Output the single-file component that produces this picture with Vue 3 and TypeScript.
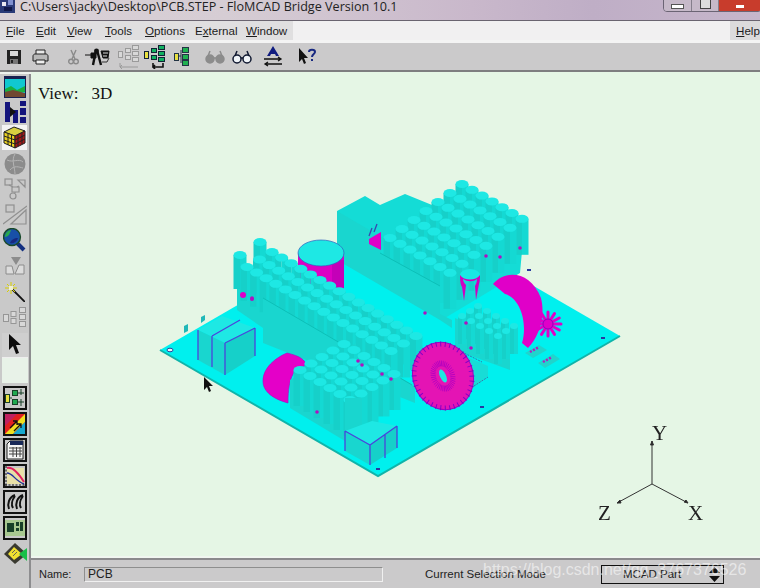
<script setup lang="ts">
interface Fin { x: number; y: number; h: number }
function grid(ox: number, oy: number, ax: number, ay: number, bx: number, by: number, na: number, nb: number, h: number): Fin[] {
  const out: Fin[] = []
  for (let b = 0; b < nb; b++) {
    for (let a = 0; a < na; a++) {
      out.push({ x: ox + a * ax + b * bx, y: oy + a * ay + b * by, h })
    }
  }
  return out.sort((p, q) => p.y - q.y)
}
const hs2 = grid(390, 240, 10, 5.8, 12, -9, 7, 7, 36)
const hs1 = [
  { x: 260, y: 244, h: 34 },
  { x: 240, y: 257, h: 34 },
  ...grid(247, 269, 9.6, 5.6, 12.5, -7.5, 16, 3, 34),
].sort((p, q) => p.y - q.y)
const hs3 = grid(300, 372, 10, 6, 11, -6.5, 6, 5, 36)
const hs4 = grid(462, 318, 9, 5, 8, -5, 5, 3, 28)

const ticks = Array.from({ length: 40 }, (_, i) => {
  const t = (i / 40) * Math.PI * 2
  const c = Math.cos(t)
  const s = Math.sin(t)
  return { x1: 443 + c * 26, y1: 378 + s * 30, x2: 443 + c * 31, y2: 378 + s * 35, x3: 443 + c * 7, y3: 378 + s * 10, x4: 443 + c * 12, y4: 378 + s * 16 }
})
const coil = Array.from({ length: 12 }, (_, i) => {
  const t = (i / 12) * Math.PI * 2
  return { x2: 548 + Math.cos(t) * 13, y2: 326 + Math.sin(t) * 12 }
})
const leftIcons = ['land', 'blue', 'rubik', 'sphere', 'shapes', 'tri', 'lens', 'gtri', 'wand', 'gtree']
const dots = [
  [362, 367], [358, 363], [382, 376], [391, 381], [317, 414],
  [252, 300], [486, 258], [500, 259], [520, 250],
  [466, 325], [471, 350], [425, 315],
]
</script>

<template>
  <div class="app">
    <header class="title">
      <svg class="appicon" width="15" height="14" viewBox="0 0 15 14">
        <rect x="0" y="0" width="15" height="14" fill="#2a3a78" />
        <rect x="2" y="3" width="4" height="4" fill="#e8e8f0" />
        <rect x="8" y="1" width="5" height="5" fill="#8090d0" />
        <rect x="4" y="8" width="8" height="4" fill="#10184a" />
      </svg>
      <span class="title-text">C:\Users\jacky\Desktop\PCB.STEP - FloMCAD Bridge Version 10.1</span>
      <div class="winbtns">
        <span class="wb wb-min"><i class="bar"></i></span>
        <span class="wb wb-max"><i class="sq"></i></span>
        <span class="wb wb-close"><i class="cross"></i></span>
      </div>
    </header>

    <nav class="menu">
      <div class="menu-left">
        <span class="m m1"><u>F</u>ile</span>
        <span class="m m2"><u>E</u>dit</span>
        <span class="m m3"><u>V</u>iew</span>
        <span class="m m4"><u>T</u>ools</span>
        <span class="m m5"><u>O</u>ptions</span>
        <span class="m m6">E<u>x</u>ternal</span>
        <span class="m m7"><u>W</u>indow</span>
      </div>
      <div class="menu-help"><u>H</u>elp</div>
    </nav>

    <div class="toolbar">
      <svg class="t-save" width="16" height="16" viewBox="0 0 16 16">
        <rect x="1" y="1" width="14" height="14" fill="#222" />
        <rect x="4" y="2" width="8" height="5" fill="#d8d8d8" />
        <rect x="4" y="10" width="8" height="5" fill="#777" />
        <rect x="5" y="11" width="2" height="3" fill="#222" />
      </svg>
      <svg class="t-print" width="17" height="16" viewBox="0 0 17 16">
        <path d="M4 1h9v5H4z" fill="#e8e8e8" stroke="#222" />
        <path d="M1 7c0-1 1-2 2-2h11c1 0 2 1 2 2v5H1z" fill="#b8b8b8" stroke="#222" />
        <path d="M4 11h9v4H4z" fill="#eee" stroke="#222" />
      </svg>
      <svg class="t-cut" width="11" height="16" viewBox="0 0 11 16" fill="none" stroke="#8a8a8a" stroke-width="1.4">
        <path d="M3 1l4 9M8 1l-4 9" />
        <circle cx="3" cy="12.5" r="2.3" />
        <circle cx="8" cy="12.5" r="2.3" />
      </svg>
      <svg class="t-fig" width="25" height="18" viewBox="0 0 25 18">
        <path d="M0 7h7M6 5h5v5H6zM16 3h8l-1 7h-5z" fill="#111" stroke="#111" />
        <path d="M11 2l-3 15M12 2l4 15" stroke="#111" stroke-width="2.4" fill="none" />
        <circle cx="11.5" cy="3" r="2.4" fill="#111" />
        <path d="M18 5h5M18 8h4" stroke="#ddd" />
        <path d="M17 14h5l2-4" stroke="#333" fill="none" />
      </svg>
      <svg class="t-tree" width="22" height="24" viewBox="0 0 22 24" fill="#d8d8d8" stroke="#9a9a9a">
        <rect x="0.5" y="6.5" width="4" height="6" />
        <rect x="7.5" y="3.5" width="5" height="4" /><rect x="14.5" y="0.5" width="6" height="4" />
        <rect x="7.5" y="10.5" width="5" height="4" /><rect x="14.5" y="6.5" width="6" height="4" />
        <rect x="14.5" y="12.5" width="6" height="4" />
        <path d="M2 18v4h18M4 20l-2 2 2 2" fill="none" />
      </svg>
      <svg class="t-tree2" width="22" height="24" viewBox="0 0 22 24" stroke="#123">
        <rect x="0.5" y="6.5" width="4" height="7" fill="#e8e040" />
        <rect x="7.5" y="3.5" width="5" height="4" fill="#10b060" /><rect x="14.5" y="0.5" width="6" height="4" fill="#10b060" />
        <rect x="7.5" y="10.5" width="5" height="4" fill="#10b060" /><rect x="14.5" y="6.5" width="6" height="4" fill="#10b060" />
        <rect x="14.5" y="12.5" width="6" height="4" fill="#10b060" />
        <path d="M9 18v4h10v-4M11 20l-2 2 2 2" fill="none" stroke="#111" stroke-width="1.6" />
      </svg>
      <svg class="t-tree3" width="15" height="19" viewBox="0 0 15 19" stroke="#234">
        <rect x="0.5" y="6.5" width="4" height="7" fill="#e8e040" />
        <rect x="8.5" y="0.5" width="6" height="5" fill="#20b050" />
        <rect x="8.5" y="7.5" width="6" height="5" fill="#20b050" />
        <rect x="8.5" y="13.5" width="6" height="5" fill="#20b050" />
        <path d="M5 9h2M7 3v13" fill="none" />
      </svg>
      <svg class="t-gl1" width="20" height="16" viewBox="0 0 20 16" fill="#8c8c8c" stroke="#8c8c8c" stroke-width="1.5">
        <circle cx="5" cy="10" r="4" /><circle cx="15" cy="10" r="4" />
        <path d="M3 7l2-5M17 7l-2-5M9 9h2" fill="none" />
      </svg>
      <svg class="t-gl2" width="20" height="16" viewBox="0 0 20 16" fill="#f0f4f8" stroke="#101830" stroke-width="1.5">
        <circle cx="5" cy="10" r="4" /><circle cx="15" cy="10" r="4" />
        <path d="M3 7l2-5M17 7l-2-5M9 9h2" fill="none" />
      </svg>
      <svg class="t-a" width="20" height="22" viewBox="0 0 20 22">
        <path d="M4 10L10 0l6 10h-3l-1-2H8l-1 2z" fill="#101c80" />
        <path d="M1 13h17M15 11l3 2-3 2M19 18H2M5 16l-3 2 3 2" fill="none" stroke="#111" stroke-width="1.3" />
      </svg>
      <svg class="t-help" width="18" height="18" viewBox="0 0 18 18">
        <path d="M0 0v14l3-3 2 5 2-1-2-5h4z" fill="#111" />
        <path d="M10 4c0-3 6-3 6 0 0 2-3 2-3 5M13 11v2" fill="none" stroke="#182880" stroke-width="2" />
      </svg>
    </div>

    <div class="body">
      <aside class="side">
        <div v-for="name in leftIcons" :key="name" class="tool">
          <svg v-if="name === 'land'" width="22" height="22" viewBox="0 0 22 22">
            <rect width="22" height="22" fill="#182050" />
            <rect x="1" y="3" width="20" height="18" fill="#10c8d0" />
            <path d="M1 13l6-3 6 4 8-4v6H1z" fill="#18b040" />
            <path d="M1 16l8-2 12 3v4H1z" fill="#704830" />
          </svg>
          <svg v-else-if="name === 'blue'" width="22" height="22" viewBox="0 0 22 22">
            <path d="M1 1h5v20H1zM16 0h6v5h-6zM16 7h6v7h-6zM16 16h6v6h-6zM9 9h5v13H9z" fill="#14147c" />
            <path d="M6 6l6 5-6 5z" fill="#111" />
          </svg>
          <svg v-else-if="name === 'rubik'" width="25" height="25" viewBox="0 0 25 25">
            <rect width="25" height="25" fill="#f4f4f4" />
            <path d="M2 7l10-5 11 4-10 5z" fill="#d8d040" stroke="#222" />
            <path d="M2 7l11 4v12L2 18z" fill="#e8d020" stroke="#222" />
            <path d="M13 11l10-5v12l-10 5z" fill="#a81818" stroke="#222" />
            <path d="M6 9v11M9.500 10v11M2 11l11 4M2 15l11 4M16 10v11M20 8v11M13 15l10-5M13 19l10-5" stroke="#222" fill="none" />
          </svg>
          <svg v-else-if="name === 'sphere'" width="22" height="24" viewBox="0 0 22 24">
            <circle cx="11" cy="12" r="10.500" fill="#8c8c8c" />
            <path d="M3 8c6 3 12-2 16 2M6 18c4-5 9-3 13-2M11 2c-4 6 0 14 0 20" stroke="#b4b4b4" fill="none" />
          </svg>
          <svg v-else-if="name === 'shapes'" width="22" height="22" viewBox="0 0 22 22" fill="none" stroke="#909090" stroke-width="1.2">
            <rect x="1" y="1" width="7" height="6" /><path d="M14 2h7v7zM8 9h7v5H8z" />
            <circle cx="9" cy="18" r="3" /><path d="M5 7l4 2M15 8l-2 1M11 14v1" />
          </svg>
          <svg v-else-if="name === 'tri'" width="24" height="22" viewBox="0 0 24 22" fill="none" stroke="#909090" stroke-width="1.2">
            <rect x="3" y="1" width="8" height="7" /><path d="M24 2L0 20M23 6v14H8z" />
          </svg>
          <svg v-else-if="name === 'lens'" width="23" height="25" viewBox="0 0 23 25">
            <path d="M12 13l9 9" stroke="#143080" stroke-width="4" />
            <circle cx="9" cy="9" r="8.500" fill="#1850a8" stroke="#1a4a28" stroke-width="1.300" />
            <path d="M2 9c0-4 3-7 6-7-1 3-2 7-6 7z" fill="#28a850" />
            <path d="M7 15c3 1 7-1 8-5-4 0-7 2-8 5z" fill="#182880" />
          </svg>
          <svg v-else-if="name === 'gtri'" width="20" height="18" viewBox="0 0 20 18">
            <path d="M6 0h10l-5 8z" fill="#8c8c8c" />
            <path d="M1 9h6l2 8H1zM14 8h5v9h-9z" fill="#dcdcdc" stroke="#8c8c8c" />
          </svg>
          <svg v-else-if="name === 'wand'" width="20" height="20" viewBox="0 0 20 20">
            <path d="M7 7l13 13" stroke="#111" stroke-width="1.800" />
            <path d="M6 0v12M0 6h12M2 2l8 8M10 2l-8 8" stroke="#d8d000" />
            <path d="M4 4h4v4H4z" fill="#f0f0d0" />
          </svg>
          <svg v-else width="23" height="20" viewBox="0 0 23 20" fill="#d8d8d8" stroke="#969696">
            <rect x="0.500" y="7.500" width="5" height="7" /><rect x="8" y="4.500" width="5" height="5" />
            <rect x="8" y="11.500" width="5" height="5" /><rect x="16.500" y="0.500" width="6" height="5" />
            <rect x="16.500" y="7.500" width="6" height="5" /><rect x="16.500" y="14.500" width="6" height="5" />
          </svg>
        </div>
        <div class="gap3"></div>
        <div class="pressed">
          <svg width="14" height="21" viewBox="0 0 14 21"><path d="M1 0v16l4-4 3 8 3-1-3-8h5z" fill="#0c0c0c" /></svg>
        </div>
        <div class="blank"></div>
        <div class="frame f1">
          <svg width="20" height="20" viewBox="0 0 20 20" stroke="#184028">
            <rect x="0.500" y="6.500" width="4" height="8" fill="#e8e040" />
            <rect x="7.500" y="2.500" width="5" height="5" fill="#20a850" /><rect x="7.500" y="11.500" width="5" height="5" fill="#20a850" />
            <path d="M4 10h3M13 5h6M13 14h6M16 1v6M16 11v7" fill="none" />
          </svg>
        </div>
        <div class="frame f2">
          <svg width="20" height="20" viewBox="0 0 20 20">
            <rect width="20" height="20" fill="#e02020" />
            <path d="M0 20L20 0v8L8 20z" fill="#f0e020" /><path d="M8 20L20 8v12z" fill="#18a8d0" />
            <path d="M0 12L12 0H0z" fill="#c02060" />
            <path d="M5 14l7-7M8 7h4v4M9 17l7-7M12 10h4v4" stroke="#111" stroke-width="1.300" fill="none" />
          </svg>
        </div>
        <div class="frame f3">
          <svg width="20" height="20" viewBox="0 0 20 20">
            <path d="M5 1h13v18H2V4z" fill="#f4f4f4" stroke="#222" />
            <rect x="5" y="1" width="13" height="4" fill="#182858" />
            <path d="M4 8h13M4 11h13M4 14h13M8 7v10M11.500 7v10M15 7v10" stroke="#444" fill="none" />
          </svg>
        </div>
        <div class="frame f4">
          <svg width="20" height="20" viewBox="0 0 20 20">
            <path d="M2 2h17v16H2z" fill="#e8e0a8" />
            <path d="M2 2c6-2 12 6 17 14" stroke="#e02060" stroke-width="2" fill="none" />
            <path d="M2 7c6 0 8 8 17 11" stroke="#2030a0" stroke-width="1.400" fill="none" />
            <path d="M1 0v20M0 19h20" stroke="#111" stroke-dasharray="2 1.500" fill="none" />
          </svg>
        </div>
        <div class="frame f5">
          <svg width="20" height="20" viewBox="0 0 20 20" fill="none" stroke="#111" stroke-width="2">
            <path d="M10 3C4 5 2 12 4 17M10 4C7 8 6 13 8 16" />
            <path d="M18 3C12 5 10 12 12 17M18 4C15 8 14 13 16 16" />
          </svg>
        </div>
        <div class="frame f6">
          <svg width="20" height="20" viewBox="0 0 20 20">
            <rect y="2" width="20" height="16" fill="#a8c890" />
            <rect x="2" y="5" width="7" height="9" fill="#184028" /><rect x="11" y="4" width="3" height="4" fill="#184028" />
            <rect x="15" y="4" width="3" height="9" fill="#184028" /><rect x="11" y="10" width="3" height="3" fill="#184028" />
          </svg>
        </div>
        <div class="diamond">
          <svg width="24" height="23" viewBox="0 0 24 23">
            <path d="M12 1l12 11-12 10L1 12z" fill="#3a3a30" />
            <path d="M11 5l8 7-8 6-6-6z" fill="#f0e030" />
            <path d="M9 11l3-3M10 14l4-4" stroke="#665" />
            <path d="M16 12l8-6v13z" fill="#18c048" />
          </svg>
        </div>
      </aside>

      <div class="right">
        <main class="canvas">
          <div class="view"><span>View:</span><span>3D</span></div>
          <svg class="scene" width="729" height="484" viewBox="31 74 729 484">
            <polygon points="160,352 402,212 620,338 378,478" class="b-top" />
            <polyline points="160,352 378,478 620,338" class="b-edge" />
            <g class="holes">
              <ellipse cx="170" cy="352" rx="3" ry="1.800" fill="#e8f8f0" stroke="#3040a0" />
              <rect x="376" y="470" width="4" height="2" /><rect x="480" y="408" width="4" height="2" />
              <rect x="601" y="339" width="4" height="2" /><rect x="527" y="271" width="4" height="2" />
            </g>

            <!-- rear heat sink block -->
            <polygon points="337,213 365,198 380,207 405,196 432,207 525,220 520,275 445,320 337,262" class="w-b" />
            <g v-for="(f, i) in hs2" :key="'a' + i">
              <rect :x="f.x - 6.500" :y="f.y" width="6.500" :height="f.h" class="f-l" />
              <rect :x="f.x" :y="f.y" width="6.500" :height="f.h" class="f-r" />
              <ellipse :cx="f.x" :cy="f.y" rx="6.500" ry="4" class="f-c" />
            </g>
            <polygon points="337,213 385,241 380,255 440,288 440,316 452,322 452,330 440,322 337,262" class="w-a" />
            <polyline points="380,255 440,288" class="w-line" />
            <polygon points="369,241 381,234 381,252 369,246" fill="#e000c8" />
            <path d="M372 230l-3 8M377 226l-3 8" stroke="#3848b0" stroke-width="1.300" />

            <!-- rear capacitor -->
            <path d="M298 255v36h46v-36z" fill="#dc00c4" />
            <path d="M332 262h12v30h-12z" fill="#c400b8" />
            <ellipse cx="321" cy="255" rx="23" ry="13" class="f-c" stroke="#3060c0" stroke-width="0.700" />

            <!-- front heat sink -->
            <polygon points="237,270 263,285 263,330 237,312" class="w-a" />
            <g v-for="(f, i) in hs1" :key="'b' + i">
              <rect :x="f.x - 6.500" :y="f.y" width="6.500" :height="f.h" class="f-l" />
              <rect :x="f.x" :y="f.y" width="6.500" :height="f.h" class="f-r" />
              <ellipse :cx="f.x" :cy="f.y" rx="6.500" ry="4" class="f-c" />
            </g>
            <polygon points="263,300 415,388 415,405 263,345" class="w-a" />
            <polyline points="263,300 412,387" class="w-line" />
            <circle cx="243" cy="297" r="3" fill="#e000c8" />
            <circle cx="252" cy="301" r="2" fill="#b010c0" />

            <!-- rear toroid -->
            <path d="M493 286C505 272 530 272 541 300 546 320 538 340 528 350L522 345C528 325 520 300 505 296z" fill="#e000c8" />

            <!-- right small fins -->
            <polygon points="455,320 510,345 510,372 455,352" class="w-a" />
            <ellipse cx="470" cy="277" rx="10" ry="6" fill="#18e8e4" />
            <path d="M460 277c0 8 1 10 2 12l2 14 2-16c-2-2-3-4-3-6 4 3 11 3 14 0 0 3-1 5-2 7l1 14 3-16c1-3 1-6 1-9-4 6-16 6-20 0z" fill="#d000c0" />
            <g v-for="(f, i) in hs4" :key="'c' + i">
              <rect :x="f.x - 4" :y="f.y" width="4" :height="f.h" class="f-l" />
              <rect :x="f.x" :y="f.y" width="4" :height="f.h" class="f-r" />
              <ellipse :cx="f.x" :cy="f.y" rx="4" ry="3" class="f-c" />
            </g>

            <!-- small coil and connectors -->
            <line v-for="(t, i) in coil" :key="'k' + i" x1="548" y1="326" :x2="t.x2" :y2="t.y2" stroke="#e000c8" stroke-width="3" stroke-linecap="round" />
            <circle cx="548" cy="326" r="5" fill="#e000c8" stroke="#9000c0" />
            <path d="M525 355l14-8 8 5-14 8zM538 365l15-9 7 5-15 9z" fill="#20d4cc" />
            <path d="M530 354l9-5M543 364l9-5" stroke="#b020c0" stroke-width="2.500" stroke-dasharray="2 1.500" />

            <!-- big toroid -->
            <polygon points="460,356 488,368 488,378 470,392" fill="#18dcd6" />
            <path d="M462 354l20 10M474 388l14-9" stroke="#3878a8" stroke-dasharray="2 1" />
            <ellipse cx="443" cy="378" rx="30" ry="34" transform="rotate(-20 443 378)" fill="#e414b4" stroke="#a000c0" />
            <g transform="rotate(-20 443 378)">
              <line v-for="(t, i) in ticks" :key="'u' + i" :x1="t.x1" :y1="t.y1" :x2="t.x2" :y2="t.y2" stroke="#8000c8" stroke-width="1" />
              <line v-for="(t, i) in ticks" :key="'v' + i" :x1="t.x3" :y1="t.y3" :x2="t.x4" :y2="t.y4" stroke="#b000c0" stroke-width="0.800" />
            </g>
            <ellipse cx="443" cy="378" rx="3" ry="7" transform="rotate(-25 443 378)" fill="#20e8e0" />

            <!-- left relays -->
            <polygon points="198,332 222,318 255,330 225,345" class="f-c" />
            <polygon points="198,332 225,345 225,377 198,362" class="w-a" />
            <polygon points="225,345 255,330 255,358 225,377" class="f-l" />
            <path d="M198 332v30M212 338v31M225 345v32M255 330v28M225 345l30-15M212 338l28-16" class="r-line" />
            <path d="M184 335l4-2v-7l-4 2zM201 325l4-3v-5l-4 2z" fill="#20b8b8" />

            <!-- left toroid -->
            <path d="M287 355C300 358 306 362 306 368 295 368 288 378 288 405 270 400 263 392 263 383 263 370 275 360 287 355z" fill="#e400c8" stroke="#b000c0" stroke-width="0.600" />

            <!-- middle heat sink -->
            <polygon points="290,382 356,345 362,437 345,443 290,410" class="w-a" />
            <g v-for="(f, i) in hs3" :key="'d' + i">
              <rect :x="f.x - 6.500" :y="f.y" width="6.500" :height="f.h" class="f-l" />
              <rect :x="f.x" :y="f.y" width="6.500" :height="f.h" class="f-r" />
              <ellipse :cx="f.x" :cy="f.y" rx="6.500" ry="4" class="f-c" />
            </g>
            <polygon points="345,400 362,400 362,440 345,432" class="w-a" />

            <!-- front relays -->
            <polygon points="345,433 372,423 397,428 370,447" class="f-c" />
            <polygon points="345,433 370,447 370,467 345,453" class="w-a" />
            <polygon points="370,447 397,428 397,450 370,467" class="f-l" />
            <path d="M345 433v20M370 447v20M397 428v22M385 437v23M345 433l25 14 27-19" class="r-line" />

            <g class="spots">
              <circle v-for="(d, i) in dots" :key="'s' + i" :cx="d[0]" :cy="d[1]" r="1.800" />
            </g>
            <path d="M204 379v13l3-3 2 5 2-1-2-5h4z" fill="#111" />

            <!-- axes -->
            <g class="axes">
              <path d="M652 486V443M652 486L617 505M652 486L688 505" />
              <path d="M652 443l-1.500 4h3zM617 505l3-3 1 3zM688 505l-4-1 2-2z" class="arrow" />
            </g>
            <text x="652" y="442" class="ax">Y</text>
            <text x="598" y="522" class="ax">Z</text>
            <text x="688" y="522" class="ax">X</text>
          </svg>
        </main>

        <footer class="status">
          <span class="name-l">Name:</span>
          <div class="name-f">PCB</div>
          <span class="sel-l">Current Selection Mode</span>
          <div class="sel">
            <span>MCAD Part</span>
            <svg width="13" height="15" viewBox="0 0 13 15"><path d="M6.500 0L12 6H1zM1 9h11l-5.500 6z" fill="#111" /></svg>
          </div>
          <span class="mark">https://blog.csdn.net/qq_3767376526</span>
        </footer>
      </div>
    </div>
  </div>
</template>

<style scoped>
.app {
  position: relative;
  width: 760px;
  height: 588px;
  overflow: hidden;
  display: flex;
  flex-direction: column;
  background: #cbcacb;
  font-family: "Liberation Sans", Arial, sans-serif;
  color: #1c1c1c;
}
.title {
  height: 20px;
  display: flex;
  align-items: flex-start;
  flex: none;
  background: linear-gradient(90deg, #d9d0d6 0%, #d6cdd4 30%, #c9b8cb 62%, #bfaec6 78%, #c6b6cb 100%);
  border-bottom: 1px solid #6a6470;
  position: relative;
}
.appicon { margin-top: -1px; flex: none; }
.title-text {
  margin: -2px 0 0 5px;
  font-family: "Open Sans", sans-serif;
  font-size: 12.600px;
  line-height: 17px;
  color: #222;
  white-space: nowrap;
}
.winbtns {
  position: absolute;
  left: 663px;
  top: -9px;
  display: flex;
  height: 19px;
  border: 1px solid #6b6474;
  border-radius: 0 0 4px 4px;
  overflow: hidden;
}
.wb { display: flex; align-items: center; justify-content: center; height: 100%; }
.wb-min { width: 27px; background: #c6b9c9; border-right: 1px solid #857e8c; }
.wb-max { width: 26px; background: #c6b9c9; border-right: 1px solid #857e8c; }
.wb-close { width: 42px; background: #c83c2c; }
.cross { display: block; width: 8px; height: 3px; margin-top: 9px; background: #fff; }
.bar { display: block; width: 11px; height: 3px; margin-top: 9px; background: #fff; border: 1px solid #555; }
.sq { display: block; width: 9px; height: 9px; margin-top: 3px; border: 1px solid #444; background: #ddd; }
.menu {
  height: 19px;
  flex: none;
  display: flex;
  justify-content: space-between;
  background: #f1f0f1;
  font-size: 11.600px;
  line-height: 19px;
}
.menu-left { display: flex; width: 293px; background: #e0dfe0; padding-left: 6px; box-sizing: border-box; white-space: nowrap; }
.m1 { width: 30px; }
.m2 { width: 31px; }
.m3 { width: 38px; }
.m4 { width: 40px; }
.m5 { width: 50px; }
.m6 { width: 51px; }
.menu-help { width: 30px; background: #dcdbdc; padding-left: 6px; box-sizing: border-box; }
.toolbar {
  height: 27px;
  flex: none;
  margin-top: 3px;
  position: relative;
  display: flex;
  align-items: center;
  background: #cbcacb;
  border-bottom: 2px solid #7e7e80;
  box-shadow: 0 -3px 0 #f4f4f4, 0 2px 0 #eef2ee;
}
.t-save { margin-left: 6px; }
.t-print { margin-left: 10px; }
.t-cut { margin-left: 19px; }
.t-fig { margin-left: 6px; }
.t-tree { margin-left: 8px; }
.t-tree2 { margin-left: 4px; }
.t-tree3 { margin-left: 8px; }
.t-gl1 { margin-left: 16px; }
.t-gl2 { margin-left: 7px; }
.t-a { margin-left: 11px; }
.t-help { margin-left: 16px; }
.body { flex: 1; min-height: 0; display: flex; }
.side {
  width: 31px;
  flex: none;
  box-sizing: border-box;
  padding-top: 2px;
  background: #c9c9c9;
  border-right: 2px solid #8d8d8f;
  display: flex;
  flex-direction: column;
  align-items: center;
  overflow: hidden;
}
.right { flex: 1; min-width: 0; display: flex; flex-direction: column; }
.tool { height: 25.600px; flex: none; display: flex; align-items: center; justify-content: center; }
.gap3 { height: 3px; flex: none; }
.pressed {
  width: 26px;
  height: 25px;
  flex: none;
  display: flex;
  align-items: center;
  justify-content: center;
  background: #cfcfcf;
  box-sizing: border-box;
  border-bottom: 1px solid #eee;
}
.blank { width: 26px; height: 25px; flex: none; margin-bottom: 3px; background: #e8f2e8; }
.frame {
  width: 24px;
  height: 24px;
  flex: none;
  margin-bottom: 2px;
  box-sizing: border-box;
  border: 2px solid #111;
  display: flex;
  align-items: center;
  justify-content: center;
  background: #c8c8c8;
}
.diamond { height: 24px; flex: none; }
.diamond svg { display: block; }
.canvas {
  flex: 1;
  position: relative;
  background: #e5f6e5;
  border-bottom: 2px solid #8a8a8c;
  box-shadow: inset 0 -2px 0 #f0f6f0;
}
.view {
  position: absolute;
  left: 7px;
  top: 12px;
  display: flex;
  gap: 13px;
  font-family: "Liberation Serif", serif;
  font-size: 17px;
  color: #111;
}
.scene { position: absolute; left: 0; top: 0; filter: blur(0.4px); }
.b-top { fill: #00f0ee; }
.b-edge { fill: none; stroke: #10b4aa; stroke-width: 2; }
.holes rect { fill: #2838a0; }
.w-a { fill: #19d6cf; }
.w-b { fill: #14dcd6; }
.w-line { fill: none; stroke: #0cc0b8; }
.f-l { fill: #16d0c9; }
.f-r { fill: #14d9d3; }
.f-c { fill: #1ee8e4; }
.r-line { fill: none; stroke: #4a44dc; stroke-width: 1.300; }
.spots circle { fill: #b010c0; }
.axes path { fill: none; stroke: #333; stroke-width: 1; }
.axes .arrow { fill: #222; }
.ax { font-family: "Liberation Serif", serif; font-size: 21px; fill: #222; }
.status {
  height: 28px;
  flex: none;
  position: relative;
  font-size: 11px;
  display: flex;
  align-items: center;
  color: #222;
}
.name-l { margin-left: 8px; width: 45px; }
.name-f {
  width: 299px;
  height: 15px;
  box-sizing: border-box;
  padding-left: 3px;
  line-height: 13px;
  border: 1px solid #f0f0f0;
  border-top-color: #8e8e8e;
  border-left-color: #8e8e8e;
  font-size: 12px;
}
.sel-l { margin-left: 42px; width: 176px; font-size: 11.500px; white-space: nowrap; }
.sel {
  width: 123px;
  height: 19px;
  box-sizing: border-box;
  border: 1px solid #111;
  display: flex;
  align-items: center;
  justify-content: space-between;
  padding: 0 2px 0 21px;
  font-size: 11.500px;
}
.mark {
  position: absolute;
  left: 452px;
  top: 1px;
  font-size: 16px;
  line-height: 18px;
  color: rgba(255, 255, 255, 0.55);
  white-space: nowrap;
}
u { text-underline-offset: 1px; }
</style>
